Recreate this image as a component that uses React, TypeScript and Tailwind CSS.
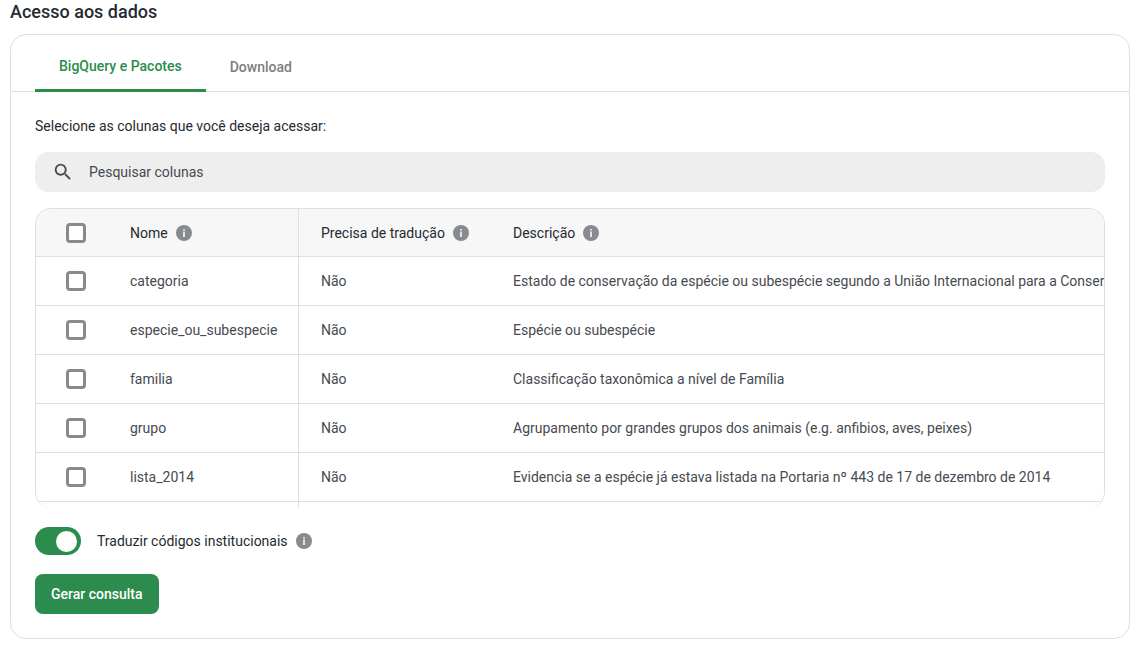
import { useState } from "react";

type Column = { name: string; translate: string; description: string };

const columns: Column[] = [
  {
    name: "categoria",
    translate: "Não",
    description:
      "Estado de conservação da espécie ou subespécie segundo a União Internacional para a Conservação",
  },
  { name: "especie_ou_subespecie", translate: "Não", description: "Espécie ou subespécie" },
  { name: "familia", translate: "Não", description: "Classificação taxonômica a nível de Família" },
  {
    name: "grupo",
    translate: "Não",
    description: "Agrupamento por grandes grupos dos animais (e.g. anfibios, aves, peixes)",
  },
  {
    name: "lista_2014",
    translate: "Não",
    description: "Evidencia se a espécie já estava listada na Portaria nº 443 de 17 de dezembro de 2014",
  },
];

function InfoIcon() {
  return (
    <svg className="size-4 shrink-0" viewBox="0 0 16 16" aria-hidden="true">
      <circle cx="8" cy="8" r="8" fill="#878a8e" />
      <path d="M7.1 4h1.8v1.6H7.1zM7.1 6.6h1.8V12H7.1z" fill="#fff" fillOpacity="0.85" />
    </svg>
  );
}

function SearchIcon() {
  return (
    <svg className="size-[22px] shrink-0" viewBox="0 0 24 24" fill="#464a51" aria-hidden="true">
      <path d="M15.5 14h-.79l-.28-.27A6.471 6.471 0 0 0 16 9.5 6.5 6.5 0 1 0 9.5 16c1.61 0 3.09-.59 4.23-1.57l.27.28v.79l5 4.99L20.49 19l-4.99-5zm-6 0C7.01 14 5 11.99 5 9.5S7.01 5 9.5 5 14 7.01 14 9.5 11.99 14 9.5 14z" />
    </svg>
  );
}

function Checkbox({ label, checked, onChange }: { label: string; checked: boolean; onChange: () => void }) {
  return (
    <input
      type="checkbox"
      aria-label={label}
      checked={checked}
      onChange={onChange}
      className="block size-5 cursor-pointer appearance-none rounded border-3 border-[#878a8e] bg-white checked:border-[#2b8c4d] checked:bg-[#2b8c4d]"
    />
  );
}

function HeaderLabel({ children }: { children: string }) {
  return (
    <span className="flex items-center gap-2">
      {children}
      <InfoIcon />
    </span>
  );
}

export default function App() {
  const [tab, setTab] = useState("bigquery");
  const [selected, setSelected] = useState<string[]>([]);
  const [translate, setTranslate] = useState(true);
  const allSelected = selected.length === columns.length;

  const toggle = (name: string) =>
    setSelected((s) => (s.includes(name) ? s.filter((n) => n !== name) : [...s, name]));

  const tabClass = (id: string) =>
    tab === id
      ? "-mb-px cursor-pointer border-b-3 border-[#2b8c4d] px-6 pt-2 text-[#2b8c4d]"
      : "cursor-pointer px-6 pt-2 text-[#7e7e7e]";

  return (
    <main className="bg-white pr-[18px] pb-3 pl-[10px] font-['Roboto',sans-serif] text-sm leading-5 text-[#252a32]">
      <h2 className="mb-[10px] text-lg leading-6 font-medium">Acesso aos dados</h2>
      <section className="rounded-2xl border border-[#dedfe0]">
        <div role="tablist" className="flex h-[57px] border-b border-[#dedfe0] px-6 font-medium">
          <button role="tab" aria-selected={tab === "bigquery"} onClick={() => setTab("bigquery")} className={tabClass("bigquery")}>
            BigQuery e Pacotes
          </button>
          <button role="tab" aria-selected={tab === "download"} onClick={() => setTab("download")} className={tabClass("download")}>
            Download
          </button>
        </div>

        <div className="p-6">
          <p>Selecione as colunas que você deseja acessar:</p>

          <label className="mt-4 flex h-10 items-center gap-[15px] rounded-[14px] bg-[#eee] px-[17px]">
            <SearchIcon />
            <input
              type="text"
              aria-label="Pesquisar colunas"
              placeholder="Pesquisar colunas"
              className="min-w-0 flex-1 bg-transparent outline-none placeholder:text-[#464a51]"
            />
          </label>

          <div className="mt-4 h-[300px] overflow-hidden rounded-2xl border border-b-0 border-[#dedfe0]">
            <table className="w-full table-fixed border-separate border-spacing-0 text-left whitespace-nowrap text-[#464a51]">
              <colgroup>
                <col className="w-[70px]" />
                <col className="w-[193px]" />
                <col className="w-[192px]" />
                <col />
              </colgroup>
              <thead className="bg-[#f7f7f7] text-[#252a32]">
                <tr className="h-12 *:border-b *:border-[#dedfe0] *:p-0 *:font-normal">
                  <th>
                    <div className="pl-[30px]">
                      <Checkbox
                        label="Selecionar todas"
                        checked={allSelected}
                        onChange={() => setSelected(allSelected ? [] : columns.map((c) => c.name))}
                      />
                    </div>
                  </th>
                  <th className="border-r">
                    <div className="pl-6"><HeaderLabel>Nome</HeaderLabel></div>
                  </th>
                  <th>
                    <div className="pl-[22px]"><HeaderLabel>Precisa de tradução</HeaderLabel></div>
                  </th>
                  <th>
                    <div className="pl-[22px]"><HeaderLabel>Descrição</HeaderLabel></div>
                  </th>
                </tr>
              </thead>
              <tbody>
                {columns.map((c) => (
                  <tr key={c.name} className="h-[49px] *:border-b *:border-[#dedfe0] *:p-0">
                    <td>
                      <div className="pl-[30px]">
                        <Checkbox label={c.name} checked={selected.includes(c.name)} onChange={() => toggle(c.name)} />
                      </div>
                    </td>
                    <td className="border-r">
                      <div className="pl-6">{c.name}</div>
                    </td>
                    <td>
                      <div className="pl-[22px]">{c.translate}</div>
                    </td>
                    <td>
                      <div className="overflow-hidden pl-[22px]">{c.description}</div>
                    </td>
                  </tr>
                ))}
                <tr className="h-[49px]" aria-hidden="true">
                  <td />
                  <td className="border-r border-[#dedfe0]" />
                  <td />
                  <td />
                </tr>
              </tbody>
            </table>
          </div>

          <label className="mt-[19px] flex w-fit cursor-pointer items-center">
            <input
              type="checkbox"
              role="switch"
              checked={translate}
              onChange={() => setTranslate(!translate)}
              className="peer sr-only"
            />
            <span className="mr-4 flex h-7 w-[46px] items-center rounded-full bg-[#c4c4c4] px-1 peer-checked:justify-end peer-checked:bg-[#2b8c4d]">
              <span className="size-[21px] rounded-full bg-white" />
            </span>
            <span className="mr-2">Traduzir códigos institucionais</span>
            <InfoIcon />
          </label>

          <button className="mt-[19px] h-10 cursor-pointer rounded-lg bg-[#2b8c4d] px-4 font-medium text-white">
            Gerar consulta
          </button>
        </div>
      </section>
    </main>
  );
}
